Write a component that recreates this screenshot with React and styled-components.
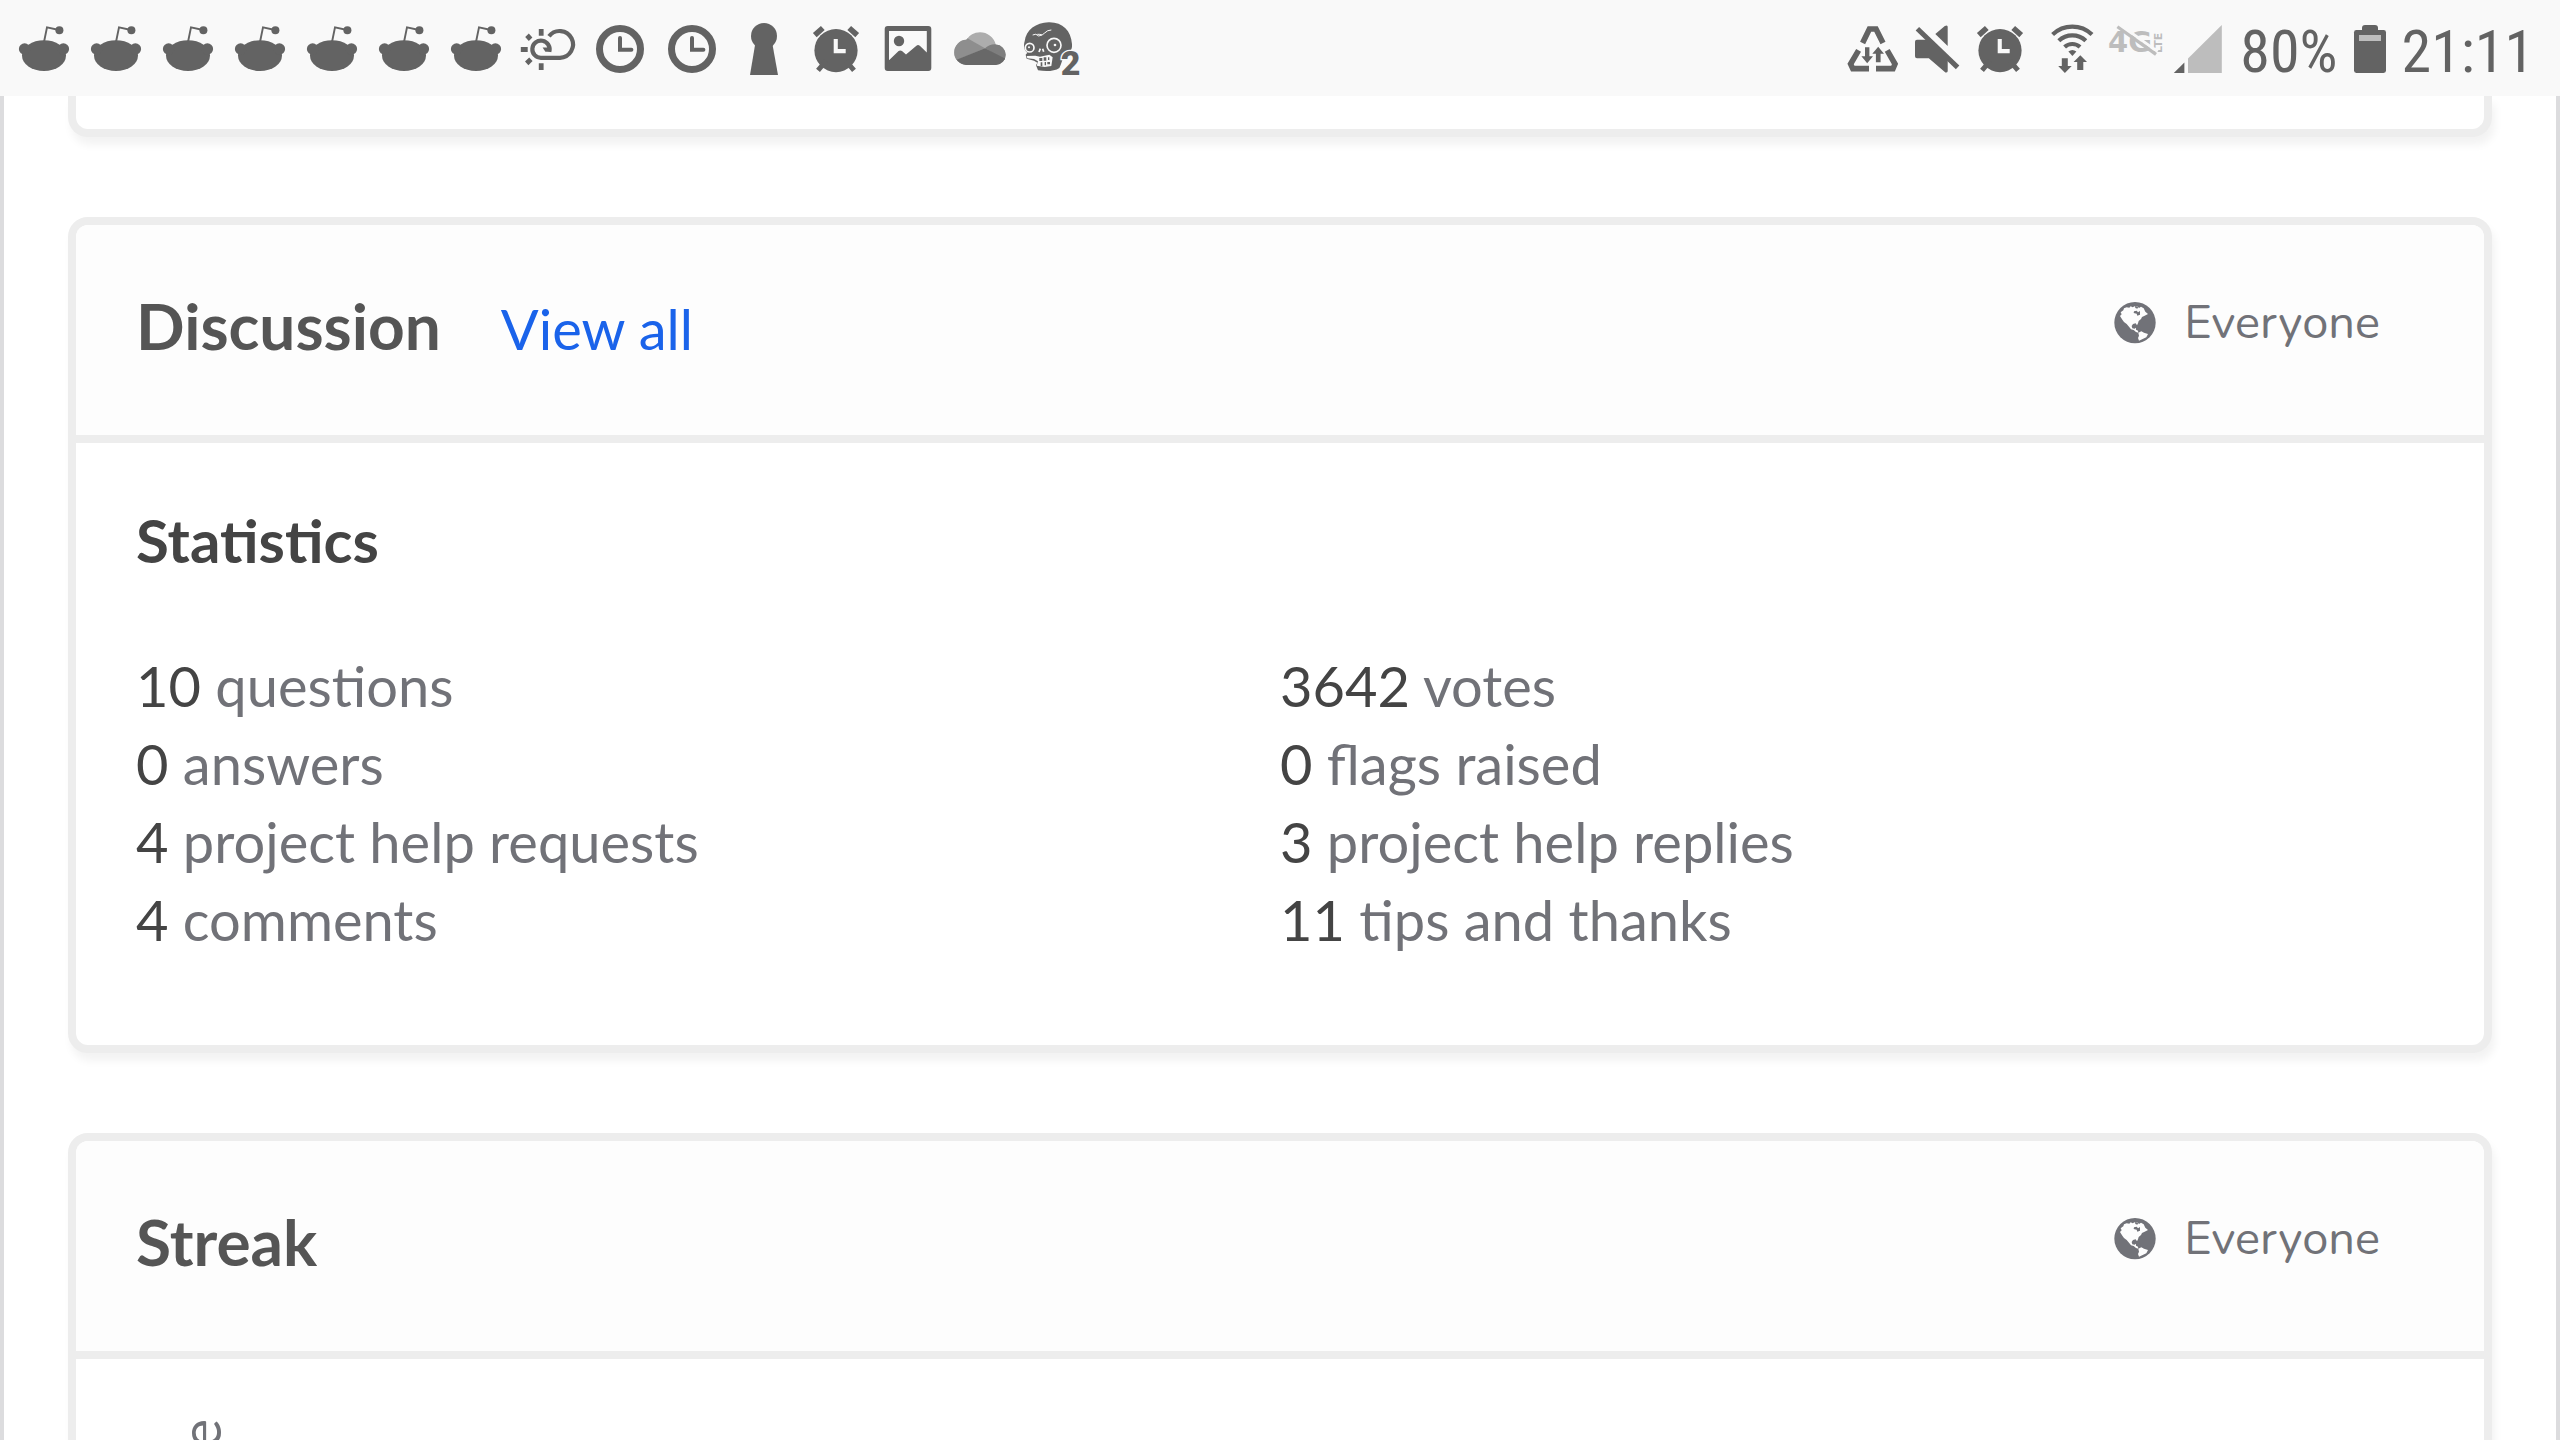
import React, { useId } from 'react';
import styled, { createGlobalStyle } from 'styled-components';

const ink = '#636363';
const faint = '#bdbdbd';
const barColor = '#f9f9f9';
const muted = '#717278';

const GlobalStyle = createGlobalStyle`
  *, *::before, *::after { box-sizing: border-box; }
  body {
    margin: 0;
    background: #fff;
    font-family: Lato, "Liberation Sans", sans-serif;
  }
  h2, h3, ul, p { margin: 0; padding: 0; }
`;

const Screen = styled.div`
  display: flex;
  flex-direction: column;
  height: 100vh;
  overflow: hidden;
`;

/* ---------- status bar ---------- */

const StatusBar = styled.header`
  display: flex;
  flex: none;
  justify-content: space-between;
  height: 96px;
  padding: 0 26px 0 8px;
  background: ${barColor};
  color: ${ink};
`;

const StatusGroup = styled.div`
  display: flex;
`;

const StatusText = styled.span`
  padding-top: 8px;
  font-family: "Roboto Condensed", Roboto, sans-serif;
  font-size: 60px;
  line-height: 88px;
  white-space: nowrap;
`;

const StatusSvg = styled.svg`
  display: block;
  flex: none;
  height: 96px;
  fill: currentColor;
`;

function StatusIcon({ width = 72, label, children }) {
  return (
    <StatusSvg width={width} viewBox={`0 0 ${width} 96`} role="img" aria-label={label}>
      {children}
    </StatusSvg>
  );
}

function RedditIcon() {
  return (
    <StatusIcon label="Reddit">
      <ellipse cx="36" cy="55.6" rx="22" ry="15.4" />
      <circle cx="16.6" cy="49" r="5.7" />
      <circle cx="55.4" cy="49" r="5.7" />
      <path d="M36 42L39 27.4L51 30" fill="none" stroke={ink} strokeWidth="1.9" />
      <circle cx="51.4" cy="30.3" r="4" />
    </StatusIcon>
  );
}

function WeatherIcon() {
  return (
    <StatusIcon label="Weather">
      <path
        d="M37 36.2A13.4 13.4 0 1 1 48 57.8H29.2A8.6 8.6 0 1 1 37.2 51.6"
        fill="none"
        stroke={ink}
        strokeWidth="4.2"
      />
      <path d="M30.6 47.6H39.2V51.8H33.4Z" />
      <path d="M26.8 29h4.8v6.8h-4.8zM26.8 63.2h4.8V70h-4.8zM8.8 47h6.9v5H8.8z" />
      <path d="M13.2 37l3.6-3.4 3.6 3.8-3.6 3.6zM13 61.4l4.2-4 3.4 3.6-4.2 4.2z" />
    </StatusIcon>
  );
}

function ClockIcon() {
  return (
    <StatusIcon label="Clock">
      <circle cx="36" cy="49" r="20.5" fill="none" stroke={ink} strokeWidth="7" />
      <path d="M36 38V49.7H47.4" fill="none" stroke={ink} strokeWidth="4" strokeLinecap="round" />
    </StatusIcon>
  );
}

function KeyholeIcon() {
  return (
    <StatusIcon label="Keyhole">
      <circle cx="36" cy="36" r="13" />
      <path d="M27.2 44H44.4L50 75H22Z" />
    </StatusIcon>
  );
}

function AlarmIcon() {
  return (
    <StatusIcon label="Alarm">
      <circle cx="36" cy="50.6" r="21.6" />
      <path
        d="M14.8 35.2L22.8 28M57.2 35.2L49.2 28"
        fill="none"
        stroke={ink}
        strokeWidth="5.6"
      />
      <path d="M26 61L18 70.4M46 61L54 70.4" fill="none" stroke={ink} strokeWidth="5" />
      <path d="M33.7 39H37.8V49H45.7V53.3H33.7Z" fill={barColor} />
    </StatusIcon>
  );
}

function PictureIcon() {
  return (
    <StatusIcon label="Screenshot">
      <path
        fillRule="evenodd"
        d="M15.7 26H56.3A3 3 0 0 1 59.3 29V68A3 3 0 0 1 56.3 71H15.7A3 3 0 0 1 12.7 68V29A3 3 0 0 1 15.7 26ZM17 31V60.3L26.6 51Q28.2 49.8 30 51L34 54.6L44.4 45.8Q46 44.4 47.8 45.8L54.8 52.4V31Z"
      />
      <circle cx="27" cy="41" r="5.2" />
    </StatusIcon>
  );
}

function CloudIcon() {
  const clip = useId();
  return (
    <StatusIcon label="Cloud">
      <clipPath id={clip}>
        <circle cx="22.8" cy="52.4" r="12.6" />
        <circle cx="36" cy="48.6" r="16.3" />
        <circle cx="51.4" cy="54.8" r="10.3" />
        <rect x="22" y="52" width="30" height="13.1" />
      </clipPath>
      <g clipPath={`url(#${clip})`}>
        <path d="M8 30H64V65.1H8Z" fill="#adadad" />
        <path d="M8 38H23L41 48.3L8 62Z" fill="#8e8e8e" />
        <path d="M41 48.3Q46 43.6 52 44.2L64 42V62Z" fill="#7e7e7e" />
        <path d="M41 48.3L64 60V65.1H8V61.6Z" fill="#686868" />
      </g>
    </StatusIcon>
  );
}

const BadgeDigit = styled.text`
  font-family: Roboto, sans-serif;
  font-size: 102px;
  font-weight: 900;
  paint-order: stroke;
  stroke: ${barColor};
  stroke-width: 8px;
`;

function ZombieIcon() {
  return (
    <StatusIcon label="Zombie game">
      <g transform="translate(4 16) scale(.3333)">
        <path d="M14 76C18 42 48 20 86 19C128 18 153 44 156 84C157 100 152 106 142 108C130 112 126 142 118 156C104 166 78 167 54 163L48 148L52 140L42 134L20 128L17 116L22 110C12 104 10 88 14 76Z" />
        <g fill="none" stroke={barColor}>
          <circle cx="102" cy="88" r="21" strokeWidth="5" />
          <circle cx="29" cy="95" r="13" strokeWidth="5" />
          <path d="M38 57Q48 51 56 60Q68 58 74 51Q82 42 94 42M52 55Q60 54 66 57" strokeWidth="3" />
          <path d="M57 108L61 98M68 98L71 107" strokeWidth="5" />
        </g>
        <circle cx="105" cy="87" r="4" fill={barColor} />
        <circle cx="27" cy="94" r="3" fill={barColor} />
        <path
          d="M20 120L46 119L60 122L88 116L98 124L94 150L74 153L50 149L54 136L42 129L22 127Z"
          fill={barColor}
        />
        <path d="M58 126h9v9h-9zM71 124h8v10h-8zM62 139h5v12h-5zM74 138h4v10h-4zM84 124h4v8h-4zM82 138h8v7h-8z" />
        <BadgeDigit x="122" y="178">2</BadgeDigit>
      </g>
    </StatusIcon>
  );
}

function DataSaverIcon() {
  return (
    <StatusIcon width={66} label="Data saver">
      <path
        d="M22.6 43L29.4 29H36L43 43M18.6 50.4L10.6 64L12.8 68.6H29M47.2 50.4L55 64L53 68.6H36"
        fill="none"
        stroke={ink}
        strokeWidth="5.6"
      />
      <path d="M25 47.3H29.4V56.3H33L27.2 63.3L21.4 56.3H25ZM38.2 46.7L44 53.7H40.6V62.3H35.9V53.7H32.3Z" />
    </StatusIcon>
  );
}

function MuteIcon() {
  return (
    <StatusIcon width={58} label="Muted">
      <path d="M11 39.7H21L41.7 60V71.2Q41.3 72.8 39.4 72.4L22.8 58.3H11Q9 58.3 9 56.3V41.7Q9 39.7 11 39.7Z" />
      <path d="M29.3 34L38.8 26Q41.7 24.4 41.7 27V46Z" />
      <path d="M11.4 28.8L51.6 67.4" fill="none" stroke={ink} strokeWidth="5" />
    </StatusIcon>
  );
}

function WifiIcon() {
  return (
    <StatusIcon width={64} label="Wi-Fi">
      <path
        d="M16.6 34.4A28.6 28.6 0 0 1 56 34.4M22.8 40.8A19.6 19.6 0 0 1 49.8 40.8M28.6 47A11.4 11.4 0 0 1 44 47"
        fill="none"
        stroke={ink}
        strokeWidth="4.2"
      />
      <path d="M32.4 51.6Q36.3 48.6 40.4 51.6L36.4 56Z" />
      <path d="M25.8 58.3H31.8V66H35.7L28.9 73L22.2 66H25.8ZM44.3 55.2L51 62H47.3V70H41.2V62H37.6Z" />
    </StatusIcon>
  );
}

const NetworkText = styled.text`
  font-family: "DejaVu Sans", sans-serif;
  font-size: ${p => p.$size}px;
  font-weight: 700;
`;

function NetworkIcon() {
  return (
    <StatusIcon width={68} label="4G LTE off">
      <g fill={faint}>
        <NetworkText $size={29} x="8" y="52">4G</NetworkText>
        <NetworkText $size={11} transform="translate(62 53) rotate(-90)">LTE</NetworkText>
      </g>
      <path d="M19 24L57.6 51.6" fill="none" stroke={barColor} strokeWidth="3" />
      <path d="M17.4 26.8L56 54.4" fill="none" stroke={faint} strokeWidth="3.2" />
    </StatusIcon>
  );
}

function SignalIcon() {
  return (
    <StatusIcon label="Signal">
      <path d="M5.8 73L16.4 62.6V73Z" />
      <path d="M20 73V58.4L53.8 25V73Z" fill={faint} />
    </StatusIcon>
  );
}

function BatteryIcon() {
  return (
    <StatusIcon width={64} label="Battery">
      <rect x="16" y="30" width="32" height="43" rx="2.4" />
      <rect x="24" y="25" width="16" height="9" rx="3" />
      <rect x="21" y="35" width="22" height="6" fill={faint} />
    </StatusIcon>
  );
}

/* ---------- page ---------- */

const Page = styled.main`
  display: flex;
  flex: 1;
  flex-direction: column;
  gap: 80px;
  min-height: 0;
  overflow: hidden;
  padding: 0 64px;
  border: solid #dcdcde;
  border-width: 0 4px;
`;

const Card = styled.section`
  flex: none;
  overflow: hidden;
  border: 8px solid #ededed;
  border-radius: 20px;
  background: #fff;
  box-shadow: 3px 8px 8px rgba(0, 0, 0, 0.05);
`;

const CardTail = styled(Card)`
  height: 41px;
  border-top: 0;
  border-top-left-radius: 0;
  border-top-right-radius: 0;
`;

const CardHeader = styled.div`
  display: flex;
  align-items: flex-start;
  justify-content: space-between;
  padding: 61px 60px 66px;
  border-bottom: 8px solid #ededed;
  background: #fdfdfd;
`;

const Heading = styled.div`
  display: flex;
  align-items: baseline;
  gap: 60px;
  min-height: 83px;
  line-height: 80px;
`;

const Title = styled.h2`
  color: #555;
  font-size: 64px;
  font-weight: 700;
`;

const ViewAll = styled.a`
  color: #1a63ea;
  font-size: 56px;
  text-decoration: none;
`;

const Visibility = styled.button`
  display: flex;
  align-items: center;
  gap: 28px;
  margin: 0 44px 0 0;
  padding: 0;
  border: 0;
  background: none;
  color: ${muted};
  font-family: Nunito, Lato, sans-serif;
  font-size: 47px;
  line-height: 74px;
`;

const GlobeSvg = styled.svg`
  display: block;
  width: 42px;
  height: 42px;
  fill: currentColor;
`;

function Globe() {
  return (
    <GlobeSvg viewBox="22 25 126 126" aria-hidden="true">
      <circle cx="85" cy="87" r="62" />
      <g fill="#fdfdfd">
        <path d="M40 67L45 62L42 56L50 50L52 44L60 41L68 42L72 38L78 41L84 38L92 38L97 43L103 39L111 44L116 54L124 61L114 66L106 70L103 76L96 82L94 89L91 95L87 89L79 91L75 97L77 104L84 105L88 102L88 108L94 111L95 117L88 115L81 109L73 107L67 99L60 91L52 85L47 78Z" />
        <path d="M95 117L104 113L112 117L124 121L119 131L108 136L97 141L94 133L97 126Z" />
      </g>
      <path d="M82 53L90 51L94 56L100 52L100 63L92 66L90 60L81 58ZM85 37L95 39L92 45L86 43Z" />
    </GlobeSvg>
  );
}

const CardBody = styled.div`
  padding: 60px 60px 86px;
`;

const Subtitle = styled.h3`
  margin-bottom: 70px;
  color: #444;
  font-size: 60px;
  font-weight: 700;
  line-height: 74px;
`;

const StatList = styled.ul`
  display: grid;
  grid-template-columns: 1fr 1fr;
  list-style: none;
`;

const Stat = styled.li`
  color: ${muted};
  font-size: 56px;
  line-height: 78px;
`;

const Count = styled.span`
  color: #444;
`;

const ChartBody = styled.div`
  min-height: 600px;
  padding: 60px;
`;

const AxisLabel = styled.span`
  display: block;
  width: 72px;
  margin-left: 28px;
  color: ${muted};
  font-size: 56px;
  line-height: 72px;
  writing-mode: vertical-rl;
  transform: rotate(180deg);
`;

const stats = [
  [10, 'questions'],
  [3642, 'votes'],
  [0, 'answers'],
  [0, 'flags raised'],
  [4, 'project help requests'],
  [3, 'project help replies'],
  [4, 'comments'],
  [11, 'tips and thanks'],
];

function PanelHeader({ title, children }) {
  return (
    <CardHeader>
      <Heading>
        <Title>{title}</Title>
        {children}
      </Heading>
      <Visibility type="button">
        <Globe />
        Everyone
      </Visibility>
    </CardHeader>
  );
}

export default function App() {
  return (
    <Screen>
      <GlobalStyle />
      <StatusBar>
        <StatusGroup>
          {Array.from({ length: 7 }, (_, i) => <RedditIcon key={i} />)}
          <WeatherIcon />
          <ClockIcon />
          <ClockIcon />
          <KeyholeIcon />
          <AlarmIcon />
          <PictureIcon />
          <CloudIcon />
          <ZombieIcon />
        </StatusGroup>
        <StatusGroup>
          <DataSaverIcon />
          <MuteIcon />
          <AlarmIcon />
          <WifiIcon />
          <NetworkIcon />
          <SignalIcon />
          <StatusText>80%</StatusText>
          <BatteryIcon />
          <StatusText>21:11</StatusText>
        </StatusGroup>
      </StatusBar>
      <Page>
        <CardTail />
        <Card>
          <PanelHeader title="Discussion">
            <ViewAll href="#discussion">View all</ViewAll>
          </PanelHeader>
          <CardBody>
            <Subtitle>Statistics</Subtitle>
            <StatList>
              {stats.map(([count, label]) => (
                <Stat key={label}>
                  <Count>{count}</Count> {label}
                </Stat>
              ))}
            </StatList>
          </CardBody>
        </Card>
        <Card>
          <PanelHeader title="Streak" />
          <ChartBody>
            <AxisLabel>e</AxisLabel>
          </ChartBody>
        </Card>
      </Page>
    </Screen>
  );
}
